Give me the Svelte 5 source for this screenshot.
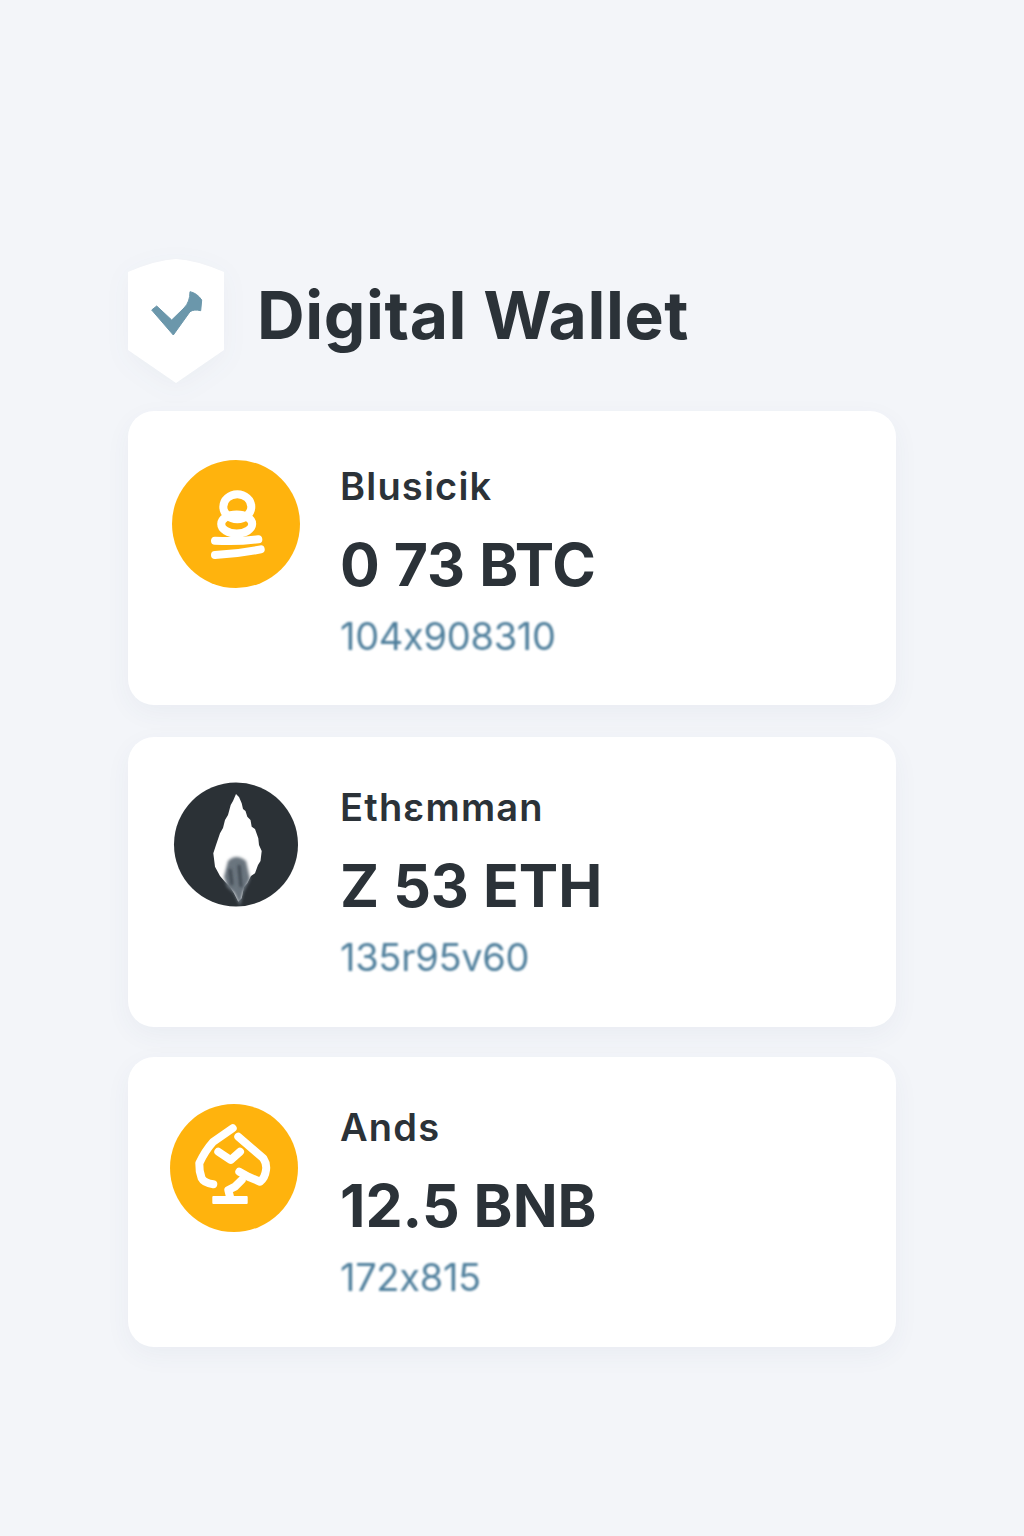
<script>
  const wallets = [
    { id: "btc", name: "Blusicik", amount: "0 73 BTC", fiat: "104x908310" },
    { id: "eth", name: "Ethεmman", amount: "Z 53 ETH", fiat: "135r95v60" },
    { id: "bnb", name: "Ands", amount: "12.5 BNB", fiat: "172x815" }
  ];
</script>

<main class="page">
  <header class="header">
    <svg class="shield" width="96" height="126" viewBox="0 0 96 126">
      <path d="M0 14Q28 2 48 1Q68 2 96 14V92L48 125L0 92Z" fill="#fff" />
      <path d="M23.7 52L28.7 48L43.7 62L56 50Q62 44 62 33.7Q69 35 73.7 42L72.7 52.7Q66 51 62 53.7L45.3 77Z" fill="#6b97ab" stroke="#6b97ab" stroke-linejoin="round" />
    </svg>
    <h1>Digital Wallet</h1>
  </header>

  <section class="cards">
    {#each wallets as w}
      <article class="card">
        <svg class="coin" width="140" height="140" viewBox="0 0 140 140">
          {#if w.id === "btc"}
            <circle cx="68" cy="69" r="64" fill="#ffb30d" />
            <g fill="none" stroke="#fff" stroke-width="8" stroke-linecap="round">
              <ellipse cx="69.3" cy="51.7" rx="14" ry="12.5" />
              <ellipse cx="68.7" cy="69" rx="15.5" ry="9.5" />
              <path d="M47 85.7Q70 87 90.3 84.3M47 100Q70 99 92.7 94.3" />
            </g>
          {:else if w.id === "eth"}
            <defs>
              <filter id="smoke" x="-50%" y="-50%" width="200%" height="200%"><feGaussianBlur stdDeviation="1.8" /></filter>
            </defs>
            <circle cx="68" cy="67.5" r="62" fill="#2b3136" />
            <path d="M68 17L71 20L73.7 26.3L75 32L77.5 34L79.3 39.7L82.5 43L83.7 49.7L87 52L90.3 61.3L91 68L93.7 74L92.5 84L90 88L87 96.3L83 99L79.3 106.3L76 110L73.7 121.3L70.3 124.7L66 116.3L62 110L57 104.7L52 99L47 89.7L45.3 76.3L48 68L52 56.3L55 51L57 43L60 38L62.7 28L65 24Z" fill="#fff" />
            <path d="M60 84Q68 76 78 84L82 102L75 116L72 129L66 116L59 110L56 100Z" fill="#6a747e" filter="url(#smoke)" />
            <path d="M62 92L64 108M71 88L73 110" stroke="#353d46" stroke-width="2.4" filter="url(#smoke)" />
            <path d="M68 57V70" stroke="#bcc1c6" stroke-width="1.6" filter="url(#smoke)" />
          {:else}
            <circle cx="66" cy="71" r="64" fill="#ffb30d" />
            <g fill="none" stroke="#fff" stroke-width="8" stroke-linecap="round" stroke-linejoin="round">
              <path d="M45.3 87.3Q36 86 33.7 81.3Q31 74 31.3 66.3Q37 54 45.3 44.7L64.7 31.3" />
              <path d="M70.3 39.7L95.3 61.3Q99 67 98 73Q97 81 92 84.7L80.3 79.7L71.3 74.7" />
              <path d="M50.3 54.7L62.7 63L72 54.7" />
              <path d="M73.7 83L67 89.7L60.3 93L62 99.7" />
            </g>
            <rect x="44.3" y="99" width="35.4" height="8" rx="1" fill="#fff" />
          {/if}
        </svg>
        <div class="info">
          <div class="name">{w.name}</div>
          <div class="amount">{w.amount}</div>
          <div class="fiat">{w.fiat}</div>
        </div>
      </article>
    {/each}
  </section>
</main>

<style>
  :global(body) {
    background: #f3f5f9;
  }

  .page {
    box-sizing: border-box;
    min-height: 1536px;
    padding: 258px 128px 0;
    font-family: Inter, "Liberation Sans", sans-serif;
    color: #2b3238;
  }

  .header {
    display: flex;
    align-items: center;
    gap: 33px;
    height: 126px;
    margin-bottom: 27px;
  }

  .shield {
    filter: drop-shadow(0 6px 12px rgba(60, 80, 110, 0.04));
  }

  h1 {
    margin: 0 0 12px;
    font-size: 66px;
    font-weight: 700;
    line-height: 1;
    letter-spacing: 0.6px;
  }

  .cards {
    display: flex;
    flex-direction: column;
    gap: 30px;
  }

  .card {
    display: flex;
    box-sizing: border-box;
    height: 290px;
    padding: 40px 0 0 40px;
    gap: 32px;
    background: #fff;
    border-radius: 26px;
    box-shadow: 0 8px 26px rgba(60, 80, 110, 0.05);
  }

  .card:first-child {
    height: 294px;
    padding-top: 44px;
    margin-bottom: 2px;
  }

  .coin {
    flex: none;
  }

  .info {
    padding-top: 4px;
  }

  .card:first-child .info {
    padding-top: 5px;
  }

  .name {
    font-size: 38px;
    font-weight: 600;
    line-height: 52px;
    letter-spacing: 1.2px;
  }

  .amount {
    margin-top: 19px;
    font-size: 59px;
    font-weight: 700;
    line-height: 68px;
  }

  .fiat {
    margin-top: 14px;
    font-size: 38px;
    font-weight: 400;
    line-height: 46px;
    letter-spacing: -0.3px;
    color: #4f7f9c;
    filter: blur(0.8px);
  }
</style>
